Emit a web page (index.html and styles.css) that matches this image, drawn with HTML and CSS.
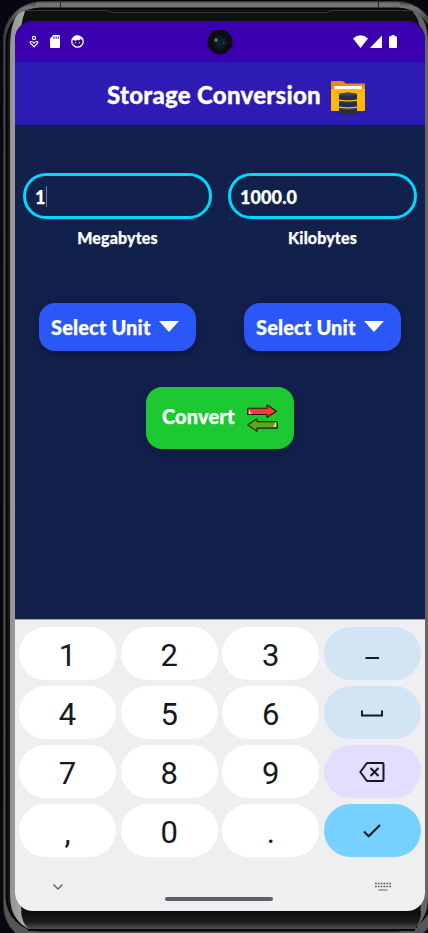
FILE: index.html
```html
<!DOCTYPE html>
<html lang="en">
<head>
<meta charset="utf-8">
<title>Storage Conversion</title>
<link rel="stylesheet" href="styles.css">
</head>
<body>
<div class="device">
  <svg class="frame" width="428" height="933" viewBox="0 0 428 933" aria-hidden="true">
    <defs>
      <linearGradient id="metal" x1="0" y1="0" x2="0" y2="1"><stop offset="0" stop-color="#3d3d3d"/><stop offset=".006" stop-color="#777"/><stop offset=".02" stop-color="#444"/><stop offset="1" stop-color="#555"/></linearGradient>
      <linearGradient id="lip" x1="0" y1="0" x2="0" y2="1"><stop offset="0" stop-color="#0c0c0c"/><stop offset=".6" stop-color="#1a1a1a"/><stop offset="1" stop-color="#505050"/></linearGradient>
      <linearGradient id="side" x1="0" y1="0" x2="1" y2="0"><stop offset="0" stop-color="#929292"/><stop offset="1" stop-color="#b2b2b2"/></linearGradient>
    </defs>
    <rect width="428" height="933" fill="#06070f"/>
    <rect x="3.500" y="1.500" width="432" height="942" rx="38" fill="url(#metal)" stroke="#343434"/>
    <path d="M36 5H400" stroke="#737373" stroke-width="5"/>
    <rect x="6.500" y="8.500" width="425" height="922" rx="34" fill="#151515" stroke="#050505" stroke-width="2"/>
    <path d="M10 50Q10 12 25 11L21 30V905Q23 922 29 929Q10 920 10 895Z" fill="url(#side)"/>
    <path d="M21 30Q22 16 26 11H412Q421 16 425 34V905L417 928H29Q21 921 21 900Z" fill="#101010"/>
    <path d="M412 11Q428 14 428 45V895Q428 920 413 929Q421 921 421 900V35Q420 19 412 11Z" fill="#666"/>
    <path d="M26 10.500H107L111 12.500H327L331 10.500H412" fill="none" stroke="#373737"/>
    <path d="M21 911H421Q421 921 415 929H29Q22 924 21 911Z" fill="url(#lip)"/>
    <path d="M28 930H415" stroke="#090909" stroke-width="2"/>
    <path d="M60.500 2V8M378.500 1V7" stroke="#222"/>
  </svg>
  <div class="screen">
    <div class="status">
      <div class="status-left">
        <svg width="10" height="14" viewBox="0 0 10 14"><g fill="none" stroke="#fff" stroke-width="1.200"><circle cx="5" cy="3" r="1.600"/><path d="M1.300 8Q.8 6.500 2.200 6.500Q3.500 6.500 5 8.200Q6.500 6.500 7.800 6.500Q9.200 6.500 8.700 8L5 11.800Z"/></g></svg>
        <svg width="10" height="13" viewBox="0 0 10 13"><path d="M3.300 0H9q1 0 1 1v11q0 1-1 1H1q-1 0-1-1V3.500Z" fill="#fff"/><path d="M4 1.500v2.300M6.200 1.500v2.300M8.300 1.500v2.300" stroke="#3a00a8" stroke-width="1"/></svg>
        <svg width="13" height="13" viewBox="0 0 13 13"><circle cx="6.500" cy="6.500" r="5.700" fill="none" stroke="#fff" stroke-width="1.300"/><path d="M1 5q2-5 5.500-4.500T12 5L9.500 4 8 5.500 6.500 4.800 4 6 3 5Z" fill="#fff"/><path d="M4.400 7.200v1M8.500 7.200v1" stroke="#fff"/></svg>
      </div>
      <svg class="camera" width="26" height="26" viewBox="0 0 26 26"><circle cx="13" cy="13" r="12.500" fill="#0b0d11"/><circle cx="13" cy="13" r="7" fill="#11171d"/><circle cx="13" cy="13" r="4" fill="#0c2030"/><circle cx="9" cy="11" r="1.700" fill="#727783"/><circle cx="17" cy="14" r="1" fill="#234f70"/></svg>
      <div class="status-right">
        <svg width="15" height="13" viewBox="0 0 15 13"><path d="M7.500 13L0 3.500Q7.500-3 15 3.500Z" fill="#fff"/></svg>
        <svg width="12" height="13" viewBox="0 0 12 13"><path d="M12 .5V13H0Z" fill="#fff"/></svg>
        <svg class="battery" width="8" height="13" viewBox="0 0 8 13"><path d="M2.500 0h3v1.300H7q1 0 1 1V12q0 1-1 1H1q-1 0-1-1V2.300q0-1 1-1h1.500Z" fill="#fff"/></svg>
      </div>
    </div>
    <header class="header">
      <h1 class="title">Storage Conversion</h1>
      <svg width="34" height="34" viewBox="0 0 34 34"><path d="M0 1Q0 0 1 0H11Q13 0 14.500 2.500H33q1 0 1 1V15H0Z" fill="#e98a10"/><path d="M3 8V6q0-1 1-1H30q1 0 1 1v3H3Z" fill="#fff"/><path d="M0 8.500Q0 8 1 8H33q1 0 1-1V29q0 1-1 1H1q-1 0-1-1Z" fill="#ffb70d"/><g fill="#252e49"><path d="M8 13q9-3 18 0V18.500q-9 1.500-18 0Z"/><path d="M8 20q9 1.500 18 0V25.500q-9 1.500-18 0Z"/><path d="M8 27q9 1.500 18 0V32.500q-9 3-18 0Z"/></g><g fill="#3b4767"><ellipse cx="17" cy="13.200" rx="9" ry="1.400"/><path d="M8 19.700q9 2 18 0v1q-9 2-18 0ZM8 26.700q9 2 18 0v1q-9 2-18 0Z"/></g></svg>
    </header>
    <main class="main">
      <div class="columns">
        <section class="column">
          <div class="field"><span>1</span><i class="caret"></i></div>
          <div class="unit">Megabytes</div>
          <button class="select"><span>Select Unit</span><svg width="20" height="11" viewBox="0 0 20 11"><path d="M0 0H20L10 11Z" fill="#fff"/></svg></button>
        </section>
        <section class="column">
          <div class="field"><span>1000.0</span></div>
          <div class="unit">Kilobytes</div>
          <button class="select"><span>Select Unit</span><svg width="20" height="11" viewBox="0 0 20 11"><path d="M0 0H20L10 11Z" fill="#fff"/></svg></button>
        </section>
      </div>
      <button class="convert"><span>Convert</span>
        <svg width="31" height="28" viewBox="0 0 31 28"><g stroke="#16220b" stroke-width="1.100" stroke-linejoin="round"><path d="M.7 4.300H20V.8L29.500 7.200 20 13.500V10.500H.7Z" fill="#fb3b30"/><path d="M30.200 17.700H10V14.700L.7 20.900 10 27.400V24.100H30.200Z" fill="#65a313"/></g><path d="M2.400 6.500v2.600h2M28.500 18.500v3.400h-2" fill="none" stroke="#fff" stroke-width="1.100"/></svg>
      </button>
    </main>
    <div class="keyboard">
      <div class="keys">
        <div class="key">1</div><div class="key">2</div><div class="key">3</div>
        <div class="key soft"><svg width="24" height="24" viewBox="0 0 24 24"><path d="M5.500 16H19" stroke="#151a1f" stroke-width="2"/></svg></div>
        <div class="key">4</div><div class="key">5</div><div class="key">6</div>
        <div class="key soft"><svg width="24" height="24" viewBox="0 0 24 24"><path d="M2 9.500V14.500H22V9.500" fill="none" stroke="#151a1f" stroke-width="2"/></svg></div>
        <div class="key">7</div><div class="key">8</div><div class="key">9</div>
        <div class="key erase"><svg width="26" height="22" viewBox="0 0 26 22"><path d="M8 2H23.500q1 0 1 1V19q0 1-1 1H8L1.300 11ZM11.500 7l8 8M19.500 7l-8 8" fill="none" stroke="#151a1f" stroke-width="2" stroke-linejoin="round"/></svg></div>
        <div class="key">,</div><div class="key">0</div><div class="key">.</div>
        <div class="key done"><svg width="20" height="16" viewBox="0 0 20 16"><path d="M2 8.500L6.700 13.300 18 2" fill="none" stroke="#151a1f" stroke-width="2"/></svg></div>
      </div>
      <div class="nav">
        <svg width="10" height="6" viewBox="0 0 10 6"><path d="M.5.500L5 5 9.500.5" fill="none" stroke="#5d5d62" stroke-width="1.300"/></svg>
        <div class="home"></div>
        <svg width="16" height="9" viewBox="0 0 16 9"><path d="M0 1.500H16M0 4.500H16" stroke="#626267" stroke-width="1.600" stroke-dasharray="1.800 1.040"/><path d="M3.500 8H12.500" stroke="#626267" stroke-width="1.100"/></svg>
      </div>
    </div>
  </div>
</div>
</body>
</html>
```
FILE: styles.css
```css
* { box-sizing: border-box; }
body { margin: 0; overflow: hidden; background: #06070f; }
svg { display: block; flex: none; }
.device { position: relative; width: 428px; height: 933px; padding: 21px 3px 22px 15px; font-family: Lato, sans-serif; color: #fff; }
.frame { position: absolute; inset: 0; }
.screen { position: relative; width: 410px; height: 890px; border-radius: 18px; overflow: hidden; display: flex; flex-direction: column; background: #12204c; }
.status { height: 41px; background: #3a00b0; display: grid; grid-template-columns: 1fr 26px 1fr; align-items: center; }
.status-left, .status-right { display: flex; align-items: center; }
.status-left { padding-left: 14px; gap: 11px; }
.status-right { justify-content: flex-end; padding-right: 28px; gap: 2px; }
.battery { margin-left: 5px; }
.header { height: 63px; background: #2c1cb4; display: flex; align-items: center; padding: 8px 0 0 92px; gap: 10px; }
.title { margin: 0 0 5px; width: 214px; font-size: 24px; line-height: 30px; font-weight: 900; letter-spacing: .27px; white-space: nowrap; -webkit-text-stroke: .3px #fff; }
.main { flex: 1; padding: 48px 8px 0; display: flex; flex-direction: column; align-items: center; }
.columns { display: grid; grid-template-columns: 189px 189px; gap: 16px; }
.column { display: flex; flex-direction: column; align-items: center; }
.field { width: 100%; height: 46px; border: 3px solid #00d9ff; border-radius: 23px; padding: 1px 0 0 9px; display: flex; align-items: center; font-size: 18px; font-weight: 900; letter-spacing: .1px; -webkit-text-stroke: .25px #fff; }
.caret { width: 1px; height: 21px; background: #6c7a98; }
.unit { height: 36px; line-height: 37px; font-size: 16px; font-weight: 900; letter-spacing: .13px; -webkit-text-stroke: .25px #fff; }
button { border: 0; color: #fff; font-family: inherit; font-weight: 900; font-size: 20px; letter-spacing: .13px; -webkit-text-stroke: .25px #fff; display: flex; align-items: center; white-space: nowrap; box-shadow: 0 3px 10px #08113080; }
.select { width: 157px; height: 48px; margin-top: 48px; padding: 0 0 0 12px; border-radius: 16px; background: #2a57f5; gap: 8px; }
.select svg { margin-bottom: 2px; }
.convert { width: 148px; height: 62px; margin-top: 36px; padding: 0 0 0 16px; border-radius: 16px; background: #1cc931; gap: 12px; }
.convert span { margin-bottom: 5px; }
.keyboard { height: 292px; border-top: 1px solid #a5a6b8; background: #efeff1; padding: 7px 4px 0; }
.keys { display: grid; grid-template-columns: repeat(4, 97px); justify-content: space-between; grid-auto-rows: 53px; row-gap: 6px; }
.key { border-radius: 27px; background: #fff; color: #151a1f; display: flex; align-items: center; justify-content: center; font: 400 31px/53px Roboto, sans-serif; padding-top: 4px; }
.key svg { margin-top: -3px; }
.soft { background: #d2e5f4; }
.erase { background: #e5ddff; }
.done { background: #76d1ff; }
.nav { height: 52px; padding: 7px 35px 0 38px; display: flex; align-items: center; justify-content: space-between; padding: 7px 30px 0 34px; }
.home { width: 108px; height: 4px; border-radius: 2px; background: #5e5e63; margin-top: 24px; }
```
